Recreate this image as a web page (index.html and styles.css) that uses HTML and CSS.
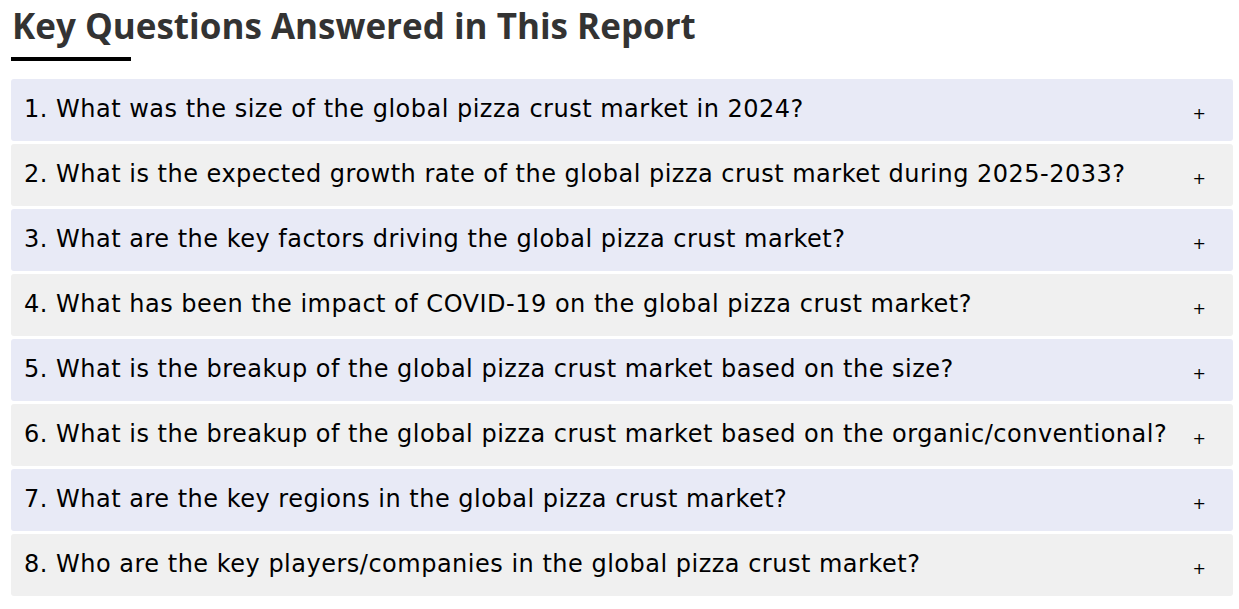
FILE: index.html
```html
<!DOCTYPE html>
<html>
<head>
<meta charset="utf-8">
<link rel="stylesheet" href="styles.css">
</head>
<body>
<section class="faq">
  <h2 class="faq-title">Key Questions Answered in This Report</h2>
  <div class="faq-rule"></div>
  <div class="faq-list">
    <div class="faq-item alt"><span class="q">1. What was the size of the global pizza crust market in 2024?</span><span class="plus">+</span></div>
    <div class="faq-item"><span class="q">2. What is the expected growth rate of the global pizza crust market during 2025-2033?</span><span class="plus">+</span></div>
    <div class="faq-item alt"><span class="q">3. What are the key factors driving the global pizza crust market?</span><span class="plus">+</span></div>
    <div class="faq-item"><span class="q">4. What has been the impact of COVID-19 on the global pizza crust market?</span><span class="plus">+</span></div>
    <div class="faq-item alt"><span class="q">5. What is the breakup of the global pizza crust market based on the size?</span><span class="plus">+</span></div>
    <div class="faq-item"><span class="q">6. What is the breakup of the global pizza crust market based on the organic/conventional?</span><span class="plus">+</span></div>
    <div class="faq-item alt"><span class="q">7. What are the key regions in the global pizza crust market?</span><span class="plus">+</span></div>
    <div class="faq-item"><span class="q">8. Who are the key players/companies in the global pizza crust market?</span><span class="plus">+</span></div>
  </div>
</section>
</body>
</html>
```
FILE: styles.css
```css
html, body { margin: 0; padding: 0; background: #fff; }
body { font-family: "DejaVu Sans", Verdana, sans-serif; }
.faq { padding: 0 6px 0 11px; }
.faq-title {
  margin: 0;
  padding-top: 5px;
  padding-left: 1px;
  font-family: "Open Sans", "DejaVu Sans", sans-serif;
  font-size: 35px;
  line-height: 42px;
  font-weight: bold;
  color: #333;
}
.faq-rule { width: 120px; height: 4px; background: #000; margin-top: 10px; }
.faq-list { margin-top: 18px; display: flex; flex-direction: column; gap: 3px; }
.faq-item {
  height: 62px;
  display: flex;
  align-items: center;
  justify-content: space-between;
  background: #f0f0f0;
  border-radius: 3px;
  padding: 0 27px 0 13px;
  color: #000;
}
.faq-item.alt { background: #e8eaf6; }
.q { font-size: 24px; letter-spacing: 0.5px; margin-top: -3px; white-space: nowrap; }
.plus { font-size: 16px; margin-top: 6px; }
```
